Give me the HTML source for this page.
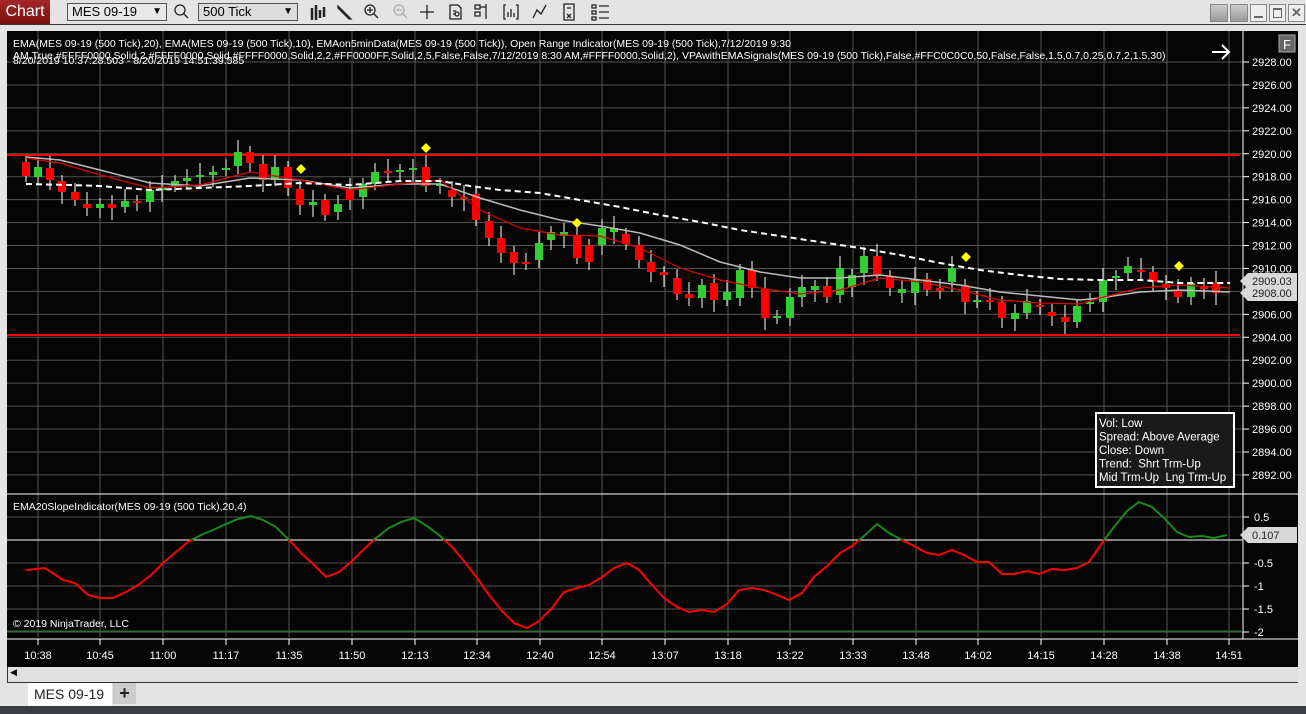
<!DOCTYPE html>
<html><head><meta charset="utf-8"><style>
body{margin:0;width:1306px;height:714px;background:#e4e4e4;overflow:hidden;font-family:"Liberation Sans",sans-serif;position:relative}
.abs{position:absolute}
.chartbtn{left:0;top:0;width:50px;height:24px;background:linear-gradient(#a52828,#7a1010);color:#fff;font-size:16px;line-height:24px;text-align:center}
.dd{top:3px;height:16px;border:1px solid #555;background:#e8e8e8;font-size:13px;line-height:16px;padding-left:4px;box-sizing:content-box}
.dd span{position:absolute;right:4px;top:0;font-size:10px}
.wbtn{top:4px;width:16px;height:16px;background:linear-gradient(#ccc,#999);border:1px solid #888}
</style></head><body>
<div class="abs chartbtn">Chart</div>
<div class="abs dd" style="left:67px;width:94px">MES 09-19<span>▼</span></div>
<div class="abs dd" style="left:198px;width:94px;background:#dcdcdc">500 Tick<span>▼</span></div>
<svg class="abs" style="left:170px;top:0" width="470" height="25" fill="none" stroke="#222" stroke-width="1.3">
<circle cx="10" cy="10" r="5"/><path d="M13.5 13.5 L18 18"/>
<path d="M142 8v12M146 5v15M150 10v8M154 7v10" stroke-width="2.5"/>
<path d="M168 6l10 10l3 3l-2 0l-11-11z"/>
<circle cx="200" cy="10" r="5"/><path d="M197 10h6M200 7v6M204 14l4 4" />
<g stroke="#aaa"><circle cx="229" cy="10" r="5"/><path d="M226 10h6M233 14l4 4"/></g>
<path d="M250 12h14M257 5v14"/>
<path d="M280 5h8l3 3v11h-11z M283 11h3M283 14h3"/><circle cx="287" cy="14" r="2"/>
<path d="M305 5h5v4h-5zM305 12h5v4h-5zM310 7h6M316 4v15"/>
<path d="M336 5h-2v14h2M346 5h2v14h-2M338 17v-5M341 17v-8M344 17v-4"/>
<path d="M363 18l4-8l4 4l5-9"/>
<path d="M394 4h10v16h-10z M397 8h4M397 14l4 4M401 14l-4 4"/>
<path d="M422 5h4v3h-4zM422 11h4v3h-4zM422 17h4v3h-4zM429 6h10M429 12h10M429 18h10"/>
</svg>
<div class="abs wbtn" style="left:1210px"></div>
<div class="abs wbtn" style="left:1230px"></div>
<div class="abs" style="left:1250px;top:4px;width:15px;height:16px;border:1px solid #888;background:#eee"><div style="position:absolute;left:3px;right:3px;bottom:3px;height:2px;background:#666"></div></div>
<div class="abs" style="left:1269px;top:4px;width:15px;height:16px;border:1px solid #888;background:#eee"><div style="position:absolute;left:3px;right:3px;top:3px;bottom:3px;border:1px solid #666;border-top-width:2px"></div></div>
<div class="abs" style="left:1288px;top:4px;width:15px;height:16px;border:1px solid #888;background:#eee;font-size:13px;text-align:center;line-height:16px;font-weight:bold;color:#666">✕</div>
<div class="abs" style="left:0;top:24px;width:1306px;height:1px;background:#333"></div>

<svg class="abs" style="left:7px;top:31px" width="1291" height="636" id="ch"></svg>
<div class="abs" style="left:7px;top:667px;width:1291px;height:15px;background:#e0e0e0;border-bottom:1px solid #333"><span style="position:absolute;left:3px;top:0;font-size:9px">◀</span></div>
<div class="abs" style="left:7px;top:667px;width:1px;height:16px;background:#333"></div>
<div class="abs" style="left:28px;top:683px;width:84px;height:23px;background:#fff;font-size:14px;line-height:22px;text-indent:6px;color:#222">MES 09-19</div>
<div class="abs" style="left:113px;top:683px;width:23px;height:21px;background:#ccc;font-size:18px;line-height:20px;text-align:center;font-weight:bold;color:#222">+</div>
<div class="abs" style="left:0;top:706px;width:1306px;height:8px;background:#3a3e44"></div>
<div class="abs" style="left:1298px;top:30px;width:8px;height:676px;background:#e4e4e4"></div>

<script>
const NS="http://www.w3.org/2000/svg";const svg=document.getElementById('ch');
let h='';const OX=7,OY=31;
function X(x){return x-OX}function Y(y){return y-OY}
h+=`<rect width="1291" height="636" fill="#050505"/>`;
const tx=[38,100,163,226,289,352,415,477,540,602,665,728,790,853,916,978,1041,1104,1167,1229];
const tl=["10:38","10:45","11:00","11:17","11:35","11:50","12:13","12:34","12:40","12:54","13:07","13:18","13:22","13:33","13:48","14:02","14:15","14:28","14:38","14:51"];
tx.forEach((x,i)=>{h+=`<line x1="${X(x)}" y1="0" x2="${X(x)}" y2="${Y(637)}" stroke="#555"/>`;h+=`<line x1="${X(x)}" y1="${Y(639)}" x2="${X(x)}" y2="${Y(645)}" stroke="#fff"/>`;h+=`<text x="${X(x)}" y="${Y(659)}" fill="#fff" font-size="11" text-anchor="middle">${tl[i]}</text>`;});
for(let i=0;i<=18;i++){const p=2928-2*i,y=62+i*22.94;h+=`<line x1="0" y1="${Y(y)}" x2="${X(1243)}" y2="${Y(y)}" stroke="#555"/>`;h+=`<line x1="${X(1243)}" y1="${Y(y)}" x2="${X(1249)}" y2="${Y(y)}" stroke="#fff"/>`;h+=`<text x="${X(1252)}" y="${Y(y+4)}" fill="#fff" font-size="11">${p}.00</text>`;}
[[517,"0.5"],[563,"-0.5"],[586,"-1"],[609,"-1.5"],[632,"-2"]].forEach(a=>{h+=`<line x1="0" y1="${Y(a[0])}" x2="${X(1243)}" y2="${Y(a[0])}" stroke="#555"/>`;h+=`<line x1="${X(1243)}" y1="${Y(a[0])}" x2="${X(1249)}" y2="${Y(a[0])}" stroke="#fff"/>`;h+=`<text x="${X(1254)}" y="${Y(a[0]+4)}" fill="#fff" font-size="11">${a[1]}</text>`;});
h+=`<line x1="${X(1243)}" y1="0" x2="${X(1243)}" y2="${Y(639)}" stroke="#fff"/>`;
h+=`<line x1="0" y1="${Y(494)}" x2="1291" y2="${Y(494)}" stroke="#fff"/>`;
h+=`<line x1="0" y1="${Y(639)}" x2="1291" y2="${Y(639)}" stroke="#fff"/>`;
h+=`<line x1="0" y1="${Y(631)}" x2="${X(1243)}" y2="${Y(631)}" stroke="#1a7a1a"/>`;
h+=`<line x1="0" y1="${Y(540)}" x2="${X(1243)}" y2="${Y(540)}" stroke="#fff"/>`;
h+=`<line x1="0" y1="${Y(155)}" x2="${X(1240)}" y2="${Y(155)}" stroke="#f00" stroke-width="2"/>`;
h+=`<line x1="0" y1="${Y(335)}" x2="${X(1240)}" y2="${Y(335)}" stroke="#f00" stroke-width="2"/>`;
function pl(pts,c,w,extra){return `<polyline fill="none" stroke="${c}" stroke-width="${w}" ${extra||''} points="${pts.map(p=>X(p[0])+','+Y(p[1])).join(' ')}"/>`}
const g=[[26,157],[60,160],[100,170],[150,183],[200,186],[250,178],[300,180],[350,188],[400,184],[440,184],[480,198],[520,210],[560,220],[600,226],[640,233],[680,245],[720,262],[760,272],[800,278],[840,278],[880,275],[920,280],[960,285],[1000,292],[1040,296],[1080,300],[1100,298],[1140,292],[1180,290],[1230,292]];
const r=[[26,158],[60,163],[100,175],[150,188],[200,185],[250,172],[300,180],[350,190],[400,184],[440,180],[480,210],[520,228],[560,235],[600,236],[640,248],[680,268],[720,280],[760,288],[800,294],[840,290],[880,278],[920,282],[960,290],[1000,300],[1040,303],[1080,304],[1100,298],[1140,288],[1180,285],[1230,288]];
const d=[[26,184],[70,185],[100,186],[150,190],[200,188],[250,186],[300,183],[350,185],[400,181],[440,181],[470,186],[500,190],[540,193],[580,200],[620,207],[660,215],[700,222],[740,230],[780,236],[820,242],[860,248],[900,255],[940,263],[980,270],[1020,275],[1060,279],[1100,280],[1140,280],[1180,283],[1230,283]];
const bars=[[26,'r',162,176],[38,'g',167,177],[50,'r',168,180],[62,'r',181,192],[75,'r',192,200],[87,'r',204,208],[100,'g',204,208],[112,'r',204,208],[125,'g',201,207],[137,'r',201,203],[150,'g',190,202],[162,'g',187,190],[175,'g',181,186],[187,'g',178,181],[200,'g',175,177],[213,'g',172,175],[226,'g',168,170],[238,'g',152,166],[250,'r',152,163],[263,'r',164,180],[275,'g',167,180],[288,'r',167,188],[300,'r',189,205],[313,'g',202,205],[325,'r',200,215],[338,'g',204,212],[350,'r',190,200],[363,'g',184,197],[375,'g',172,184],[388,'r',171,173],[400,'g',170,172],[413,'g',168,170],[426,'r',167,186],[440,'g',184,186],[452,'r',190,197],[464,'r',197,199],[476,'r',194,220],[489,'r',221,238],[501,'r',238,253],[514,'r',252,263],[526,'r',262,264],[539,'g',243,260],[551,'g',232,240],[564,'g',232,236],[577,'r',236,258],[589,'r',245,262],[602,'g',228,245],[614,'g',228,232],[626,'r',234,244],[639,'r',245,260],[651,'r',262,272],[664,'r',272,275],[677,'r',278,294],[689,'r',294,298],[702,'g',285,298],[714,'r',283,300],[727,'g',292,300],[740,'g',270,298],[752,'r',270,288],[765,'r',289,318],[777,'g',316,318],[790,'g',297,318],[802,'g',287,297],[815,'g',286,290],[827,'r',286,297],[840,'g',268,295],[852,'g',275,287],[864,'g',256,273],[877,'r',256,275],[890,'r',276,288],[902,'g',289,293],[915,'g',279,293],[927,'r',279,290],[940,'r',288,291],[952,'g',268,282],[965,'r',285,302],[977,'g',300,302],[990,'r',300,302],[1002,'r',302,318],[1015,'g',313,319],[1027,'g',301,313],[1040,'r',305,307],[1052,'r',312,316],[1065,'r',317,322],[1077,'g',306,322],[1090,'g',302,304],[1103,'g',280,302],[1116,'g',276,278],[1128,'g',266,273],[1141,'r',270,272],[1153,'r',272,282],[1166,'r',284,288],[1178,'r',291,297],[1191,'g',283,297],[1204,'r',287,289],[1216,'r',283,293]];
bars.forEach((b,i)=>{const hi=b[2]-6-(i%3)*3,lo=b[3]+6+(i%4)*2;h+=`<line x1="${X(b[0])}" y1="${Y(hi)}" x2="${X(b[0])}" y2="${Y(lo)}" stroke="#fff"/>`;h+=`<rect x="${X(b[0])-4}" y="${Y(b[2])}" width="8" height="${Math.max(2,b[3]-b[2])}" fill="${b[1]=='r'?'#f00':'#32cd32'}"/>`;});
h+=pl(g,'#bbb',1.5)+pl(r,'#d00',1.2)+pl(d,'#fff',2,'stroke-dasharray="6,4"');
[[301,169],[426,148],[577,223],[966,257],[1179,266]].forEach(p=>{h+=`<rect x="${X(p[0])-3.5}" y="${Y(p[1])-3.5}" width="7" height="7" fill="#ff0" transform="rotate(45 ${X(p[0])} ${Y(p[1])})"/>`});
const s=[[26,570],[45,568],[63,580],[75,583],[88,595],[100,598],[113,598],[126,592],[138,585],[151,575],[163,563],[176,552],[188,542],[201,535],[213,530],[226,524],[238,519],[251,516],[263,520],[276,527],[289,540],[301,553],[314,565],[326,577],[339,572],[351,562],[364,549],[376,538],[389,528],[401,522],[414,518],[427,526],[439,535],[452,547],[464,561],[477,578],[489,595],[502,611],[514,623],[527,628],[539,621],[552,608],[564,592],[577,588],[589,585],[602,577],[614,568],[627,563],[639,570],[652,585],[664,598],[677,607],[689,612],[702,610],[714,612],[727,604],[739,590],[752,588],[764,590],[777,595],[789,600],[802,593],[814,577],[827,566],[840,553],[852,546],[864,536],[877,524],[889,533],[902,540],[914,546],[927,553],[939,555],[952,550],[964,555],[977,562],[989,562],[1002,574],[1014,574],[1027,571],[1039,574],[1052,569],[1064,570],[1077,568],[1089,562],[1102,543],[1114,527],[1127,511],[1139,502],[1152,507],[1164,518],[1177,532],[1189,537],[1202,536],[1214,538],[1227,535]];
h+=`<clipPath id="cg"><rect x="0" y="0" width="1291" height="${Y(540)}"/></clipPath><clipPath id="cr"><rect x="0" y="${Y(540)}" width="1291" height="200"/></clipPath>`;
h+=pl(s,'#f00',2,'clip-path="url(#cr)"')+pl(s,'#1a8a1a',2,'clip-path="url(#cg)"');
// price labels
function lab(y,t){h+=`<polygon points="${X(1240)},${Y(y)} ${X(1248)},${Y(y-8)} ${X(1297)},${Y(y-8)} ${X(1297)},${Y(y+8)} ${X(1248)},${Y(y+8)}" fill="#d8d8d8"/><text x="${X(1252)}" y="${Y(y+4)}" fill="#222" font-size="11">${t}</text>`}
lab(281,"2909.03");lab(293,"2908.00");lab(535,"0.107");
// info box
h+=`<rect x="${X(1096)}" y="${Y(413)}" width="138" height="74" fill="#1a1a1a" stroke="#fff" stroke-width="2"/>`;
["Vol: Low","Spread: Above Average","Close: Down","Trend:  Shrt Trm-Up","Mid Trm-Up  Lng Trm-Up"].forEach((t,i)=>{h+=`<text x="${X(1099)}" y="${Y(427+i*13.5)}" fill="#fff" font-size="11.5" xml:space="preserve">${t}</text>`});
h+=`<text x="6" y="${Y(47)}" fill="#fff" font-size="10.5">EMA(MES 09-19 (500 Tick),20), EMA(MES 09-19 (500 Tick),10), EMAon5minData(MES 09-19 (500 Tick)), Open Range Indicator(MES 09-19 (500 Tick),7/12/2019 9:30</text>`;
h+=`<text x="6" y="${Y(59)}" fill="#fff" font-size="10.5">AM,True,#FFFF0000,Solid,2,#FFFF0000,Solid,#FFFF0000,Solid,2,2,#FF0000FF,Solid,2,5,False,False,7/12/2019 8:30 AM,#FFFF0000,Solid,2), VPAwithEMASignals(MES 09-19 (500 Tick),False,#FFC0C0C0,50,False,False,1.5,0.7,0.25,0.7,2,1.5,30)</text>`;
h+=`<text x="6" y="${Y(64)}" fill="#fff" font-size="10.5">8/20/2019 10:37:28.503 - 8/20/2019 14:51:39.585</text>`;
h+=`<text x="6" y="${Y(510)}" fill="#fff" font-size="10.5">EMA20SlopeIndicator(MES 09-19 (500 Tick),20,4)</text>`;
h+=`<text x="6" y="${Y(627)}" fill="#fff" font-size="10.5">© 2019 NinjaTrader, LLC</text>`;
h+=`<path d="M${X(1212)} ${Y(52)}h16M${X(1222)} ${Y(45)}l7 7l-7 7" stroke="#fff" stroke-width="2" fill="none"/>`;
h+=`<rect x="${X(1279)}" y="${Y(35)}" width="16" height="17" fill="#666" stroke="#aaa"/><text x="${X(1287)}" y="${Y(49)}" fill="#fff" font-size="13" text-anchor="middle">F</text>`;
svg.innerHTML=h;
</script>
</body></html>
